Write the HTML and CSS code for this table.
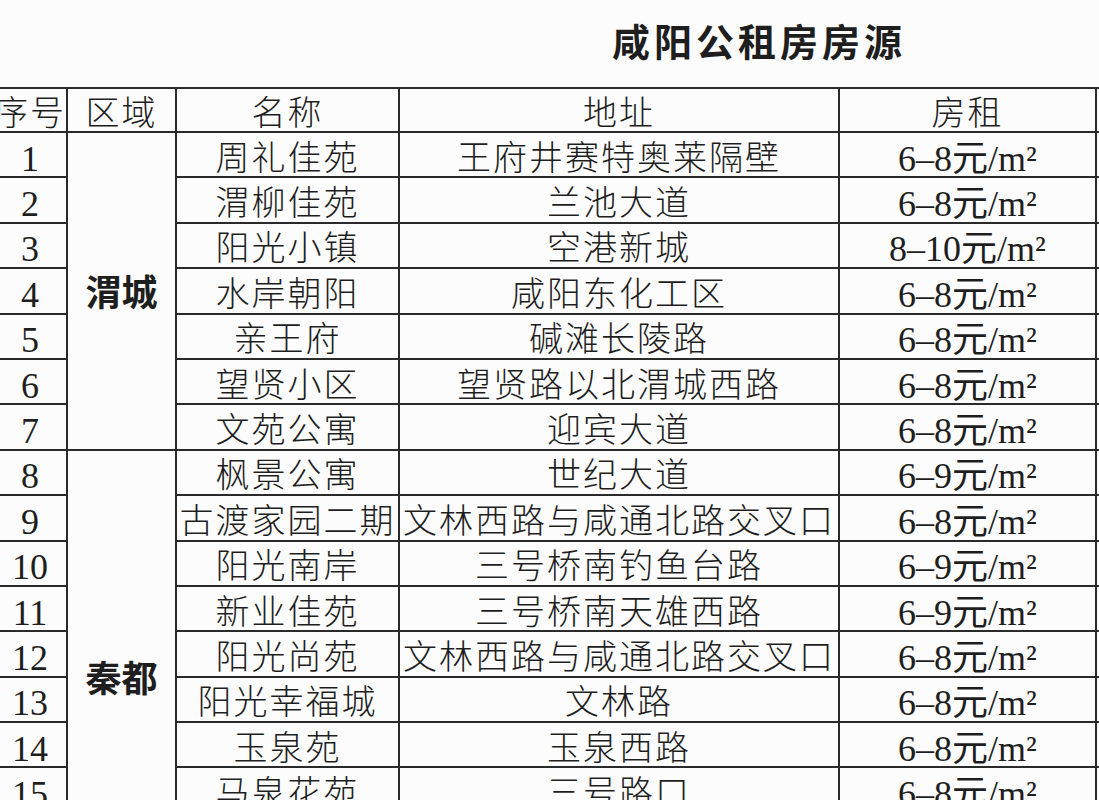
FILE: index.html
```html
<!DOCTYPE html>
<html lang="zh-CN">
<head>
<meta charset="utf-8">
<title>咸阳公租房房源</title>
<link rel="stylesheet" href="styles.css">
</head>
<body>
<div class="page">
  <h1 class="title">咸阳公租房房源</h1>
  <table class="sheet">
    <colgroup>
      <col class="c-no"><col class="c-area"><col class="c-name"><col class="c-addr"><col class="c-rent"><col class="c-extra">
    </colgroup>
    <thead>
      <tr><th>序号</th><th>区域</th><th>名称</th><th>地址</th><th>房租</th><th></th></tr>
    </thead>
    <tbody>
      <tr><td class="num">1</td><td class="area area-wc" rowspan="7">渭城</td><td>周礼佳苑</td><td>王府井赛特奥莱隔壁</td><td class="num">6–8元/m²</td><td></td></tr>
      <tr><td class="num">2</td><td>渭柳佳苑</td><td>兰池大道</td><td class="num">6–8元/m²</td><td></td></tr>
      <tr><td class="num">3</td><td>阳光小镇</td><td>空港新城</td><td class="num">8–10元/m²</td><td></td></tr>
      <tr><td class="num">4</td><td>水岸朝阳</td><td>咸阳东化工区</td><td class="num">6–8元/m²</td><td></td></tr>
      <tr><td class="num">5</td><td>亲王府</td><td>碱滩长陵路</td><td class="num">6–8元/m²</td><td></td></tr>
      <tr><td class="num">6</td><td>望贤小区</td><td>望贤路以北渭城西路</td><td class="num">6–8元/m²</td><td></td></tr>
      <tr><td class="num">7</td><td>文苑公寓</td><td>迎宾大道</td><td class="num">6–8元/m²</td><td></td></tr>
      <tr><td class="num">8</td><td class="area area-qd" rowspan="8">秦都</td><td>枫景公寓</td><td>世纪大道</td><td class="num">6–9元/m²</td><td></td></tr>
      <tr><td class="num">9</td><td>古渡家园二期</td><td>文林西路与咸通北路交叉口</td><td class="num">6–8元/m²</td><td></td></tr>
      <tr><td class="num">10</td><td>阳光南岸</td><td>三号桥南钓鱼台路</td><td class="num">6–9元/m²</td><td></td></tr>
      <tr><td class="num">11</td><td>新业佳苑</td><td>三号桥南天雄西路</td><td class="num">6–9元/m²</td><td></td></tr>
      <tr><td class="num">12</td><td>阳光尚苑</td><td>文林西路与咸通北路交叉口</td><td class="num">6–8元/m²</td><td></td></tr>
      <tr><td class="num">13</td><td>阳光幸福城</td><td>文林路</td><td class="num">6–8元/m²</td><td></td></tr>
      <tr><td class="num">14</td><td>玉泉苑</td><td>玉泉西路</td><td class="num">6–8元/m²</td><td></td></tr>
      <tr><td class="num">15</td><td>马泉花苑</td><td>三号路口</td><td class="num">6–8元/m²</td><td></td></tr>
    </tbody>
  </table>
</div>
</body>
</html>
```
FILE: styles.css
```css
html, body {
  margin: 0;
  padding: 0;
  background: #fcfcfc;
  overflow: hidden;
}
.page {
  width: 1099px;
  height: 800px;
  overflow: hidden;
  font-family: "Liberation Serif", "Noto Sans CJK SC", serif;
  color: #1e1e1e;
}
.title {
  margin: 0;
  height: 87px;
  box-sizing: border-box;
  padding: 15px 0 0 612px;
  font-family: "Noto Sans CJK SC", sans-serif;
  font-size: 38px;
  font-weight: 700;
  letter-spacing: 4px;
  line-height: 50px;
  white-space: nowrap;
}
.sheet {
  margin-left: -8px;
  border-collapse: collapse;
  table-layout: fixed;
  width: 1210px;
}
.c-no { width: 74px; }
.c-area { width: 109px; }
.c-name { width: 223px; }
.c-addr { width: 440px; }
.c-rent { width: 257px; }
.c-extra { width: 107px; }
.sheet th, .sheet td {
  border: 2px solid #2a2a2a;
  height: 35.4px;
  padding: 8px 0 0 0;
  text-align: center;
  vertical-align: middle;
  font-size: 34px;
  font-weight: 300;
  letter-spacing: 2px;
  line-height: 34px;
  white-space: nowrap;
  overflow: visible;
}
.sheet th {
  height: 35px;
  padding-top: 7px;
}
.sheet td.num {
  font-size: 36px;
  font-weight: 400;
  letter-spacing: 0;
}
.sheet td.area {
  font-size: 36px;
  font-weight: 700;
  letter-spacing: 0;
  padding: 6px 0 0 0;
}
.sheet td.area-qd {
  vertical-align: top;
  padding-top: 212px;
}
```
